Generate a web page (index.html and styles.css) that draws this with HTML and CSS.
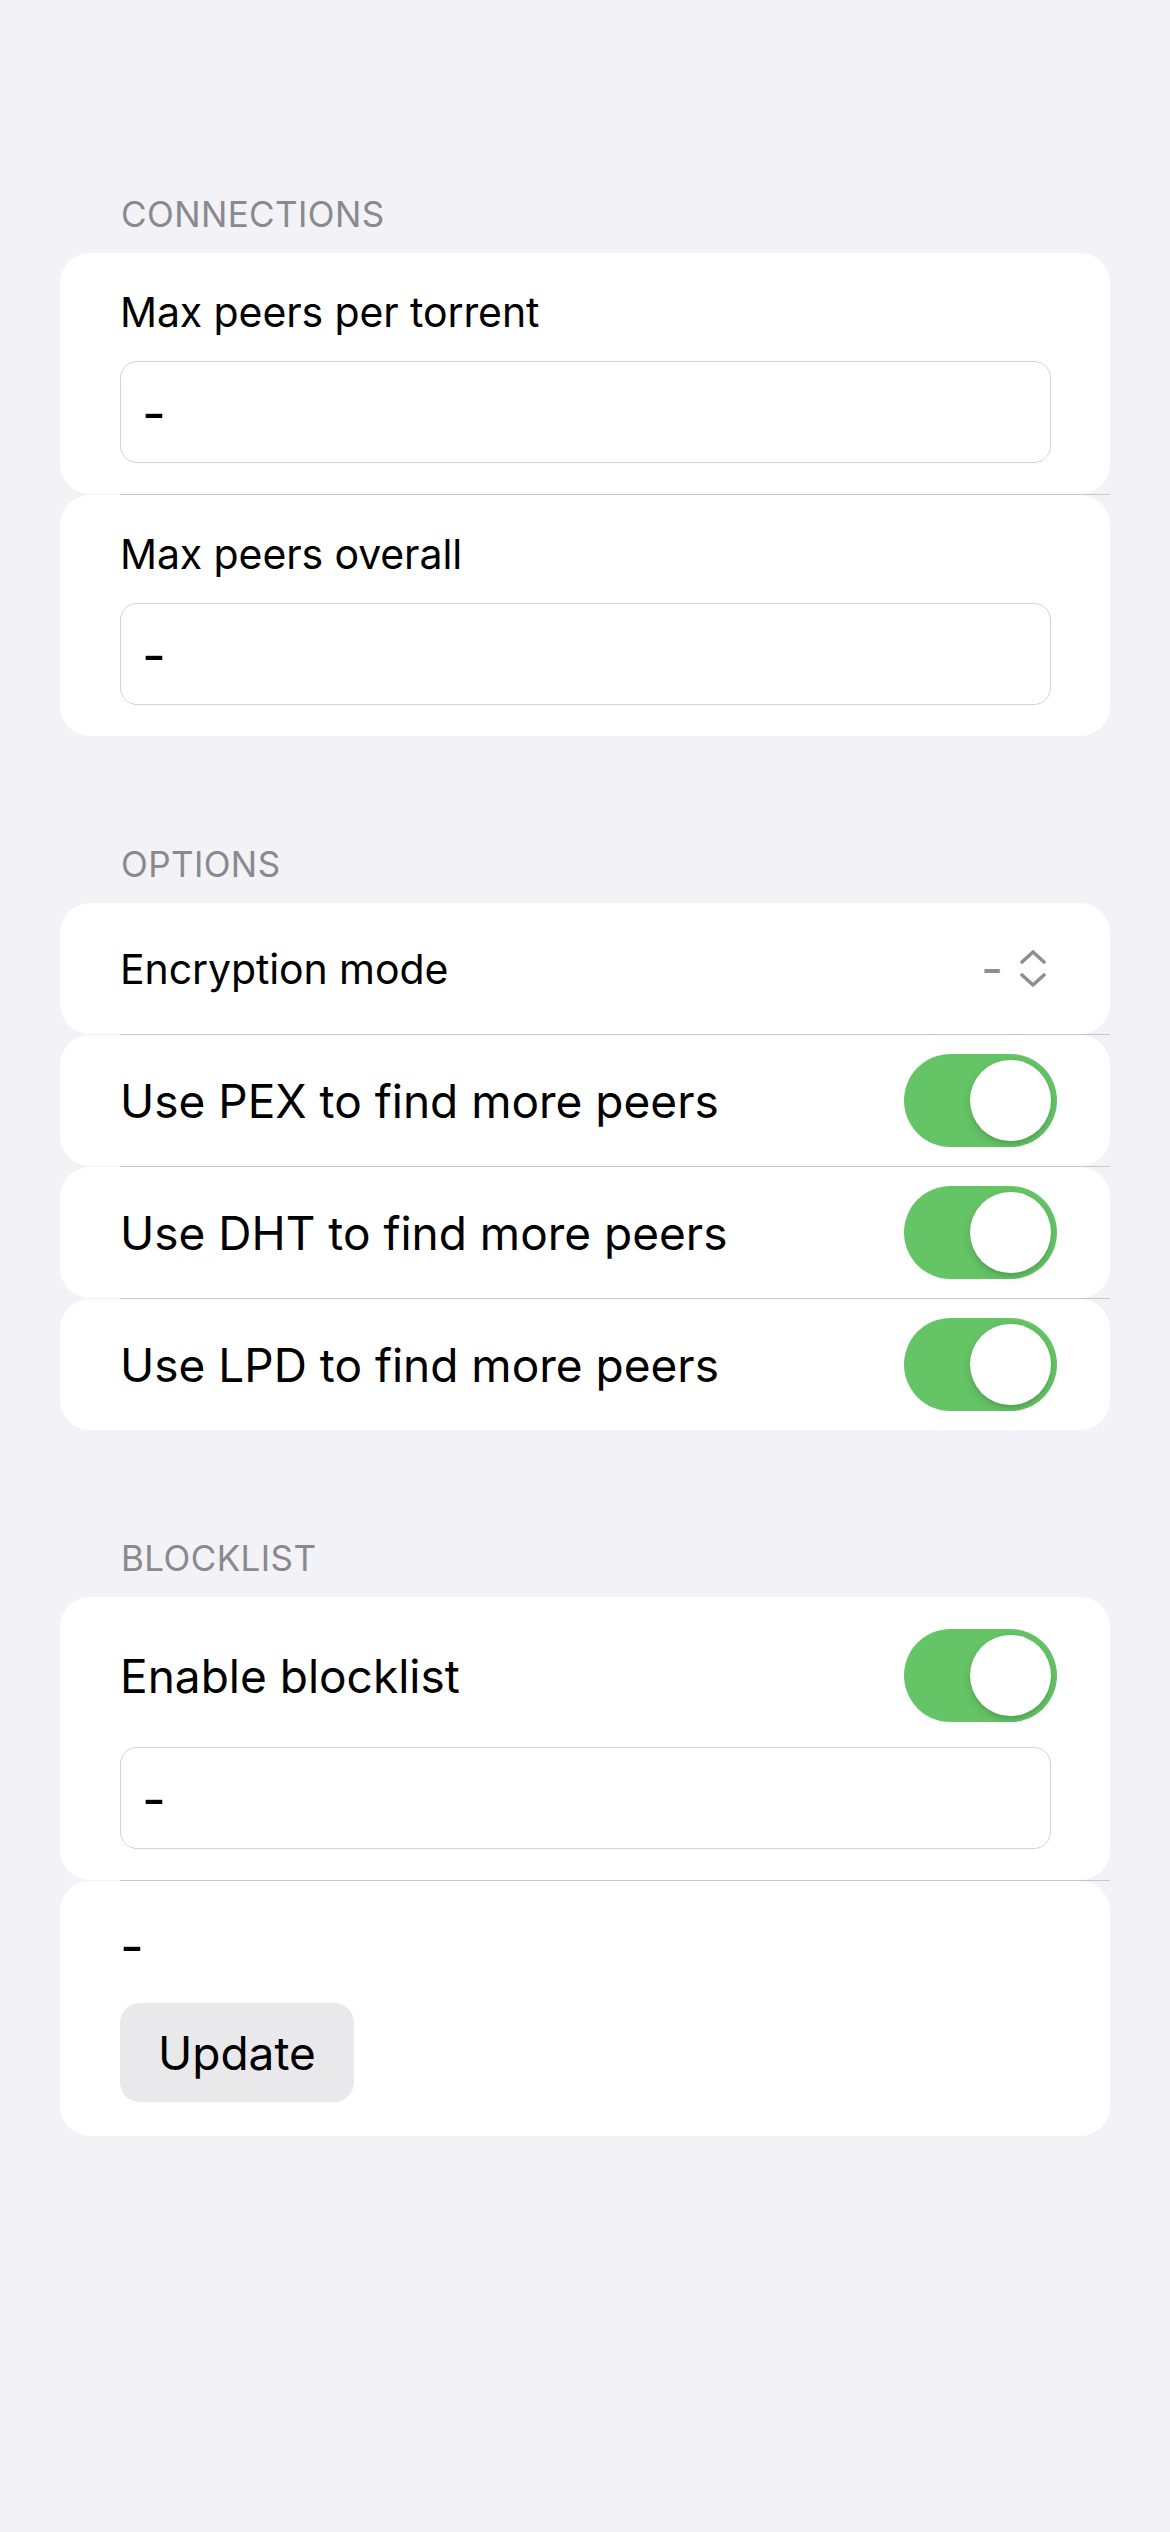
FILE: index.html
```html
<!DOCTYPE html>
<html lang="en">
<head>
<meta charset="utf-8">
<title>Settings</title>
<link rel="stylesheet" href="styles.css">
</head>
<body>
<main class="page">
  <section class="section">
    <h2 class="section-header">CONNECTIONS</h2>
    <div class="group">
      <div class="card field-card">
        <div class="field-label">Max peers per torrent</div>
        <div class="text-input"><span class="dash">-</span></div>
      </div>
      <div class="sep"></div>
      <div class="card field-card">
        <div class="field-label">Max peers overall</div>
        <div class="text-input"><span class="dash">-</span></div>
      </div>
    </div>
  </section>

  <section class="section">
    <h2 class="section-header">OPTIONS</h2>
    <div class="group">
      <div class="card row-card picker-row">
        <span class="field-label">Encryption mode</span>
        <span class="picker">
          <span class="picker-value">-</span>
          <svg class="chevrons" width="26" height="37" viewBox="0 0 26 37" aria-hidden="true">
            <path d="M2 12 L13 2 L24 12" fill="none" stroke="#8e8e93" stroke-width="3.6" stroke-linecap="round" stroke-linejoin="round"/>
            <path d="M2 25 L13 35 L24 25" fill="none" stroke="#8e8e93" stroke-width="3.6" stroke-linecap="round" stroke-linejoin="round"/>
          </svg>
        </span>
      </div>
      <div class="sep"></div>
      <div class="card row-card">
        <span class="toggle-label">Use PEX to find more peers</span>
        <span class="toggle"><span class="knob"></span></span>
      </div>
      <div class="sep"></div>
      <div class="card row-card">
        <span class="toggle-label">Use DHT to find more peers</span>
        <span class="toggle"><span class="knob"></span></span>
      </div>
      <div class="sep"></div>
      <div class="card row-card">
        <span class="toggle-label">Use LPD to find more peers</span>
        <span class="toggle"><span class="knob"></span></span>
      </div>
    </div>
  </section>

  <section class="section">
    <h2 class="section-header">BLOCKLIST</h2>
    <div class="group">
      <div class="card blocklist-card">
        <div class="toggle-line">
          <span class="toggle-label">Enable blocklist</span>
          <span class="toggle"><span class="knob"></span></span>
        </div>
        <div class="text-input"><span class="dash">-</span></div>
      </div>
      <div class="sep"></div>
      <div class="card update-card">
        <div class="status">-</div>
        <button class="update-btn" type="button">Update</button>
      </div>
    </div>
  </section>
</main>
</body>
</html>
```

FILE: styles.css
```css
* {
  box-sizing: border-box;
}

html, body {
  margin: 0;
  padding: 0;
  background: #f2f2f7;
}

body {
  font-family: Inter, "Noto Sans", "Liberation Sans", sans-serif;
  color: #000;
  min-height: 2532px;
}

.page {
  padding: 194px 60px 0;
}

.section + .section {
  margin-top: 108px;
}

.section-header {
  margin: 0 0 19px;
  padding-left: 61px;
  font-size: 35px;
  line-height: 40px;
  font-weight: 400;
  color: #8a8a8e;
  letter-spacing: 0.4px;
}

.group {
  display: flex;
  flex-direction: column;
}

.card {
  background: #fff;
  border-radius: 30px;
}

.sep {
  height: 1px;
  margin-left: 60px;
  background: #c8c8cc;
}

.field-card {
  padding: 35px 59px 31px 60px;
}

.field-label {
  font-size: 41px;
  line-height: 48px;
  letter-spacing: -0.1px;
}

.text-input {
  margin-top: 25px;
  height: 102px;
  border: 1.5px solid #d4d4d8;
  border-radius: 17px;
  padding-left: 21px;
  padding-top: 4px;
  display: flex;
  align-items: center;
}

.dash {
  font-size: 52px;
  line-height: 48px;
}

.row-card {
  height: 131px;
  display: flex;
  align-items: center;
  justify-content: space-between;
  padding: 0 53px 0 60px;
}

.picker-row {
  padding-right: 64px;
}

.picker {
  display: flex;
  align-items: center;
  gap: 17px;
}

.picker-value {
  font-size: 48px;
  line-height: 48px;
  color: #8e8e93;
}

.chevrons {
  display: block;
}

.toggle-label {
  font-size: 46px;
  line-height: 54px;
  letter-spacing: 0;
}

.toggle {
  position: relative;
  flex: none;
  width: 153px;
  height: 93px;
  border-radius: 47px;
  background: #65c466;
}

.knob {
  position: absolute;
  top: 6px;
  right: 6px;
  width: 81px;
  height: 81px;
  border-radius: 50%;
  background: #fff;
  box-shadow: 0 4px 10px rgba(0, 0, 0, 0.14), 0 3px 1px rgba(0, 0, 0, 0.05);
}

.blocklist-card {
  padding: 32px 59px 31px 60px;
}

.toggle-line {
  display: flex;
  align-items: center;
  justify-content: space-between;
  height: 93px;
  margin-right: -6px;
}

.update-card {
  padding: 42px 60px 34px;
}

.status {
  font-size: 52px;
  line-height: 48px;
}

.update-btn {
  display: block;
  margin-top: 32px;
  height: 99px;
  padding: 0 38px;
  border: none;
  border-radius: 20px;
  background: #e9e9eb;
  font-family: inherit;
  font-size: 46px;
  color: #000;
  letter-spacing: 0;
}
```
